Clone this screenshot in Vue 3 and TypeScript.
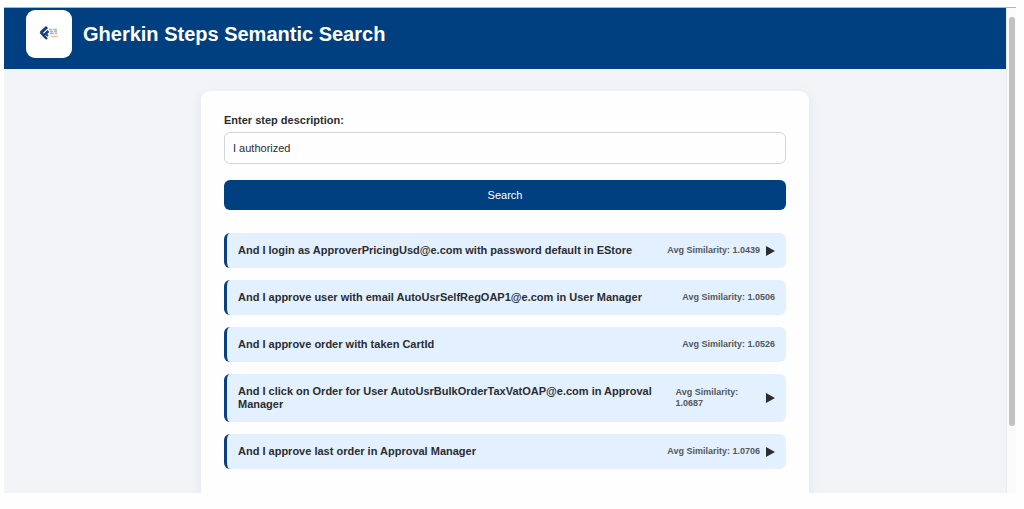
<script setup lang="ts">
import { ref } from 'vue'

interface StepResult {
  text: string
  score: string
  expandable: boolean
}

const query = ref('I authorized')

const results: StepResult[] = [
  { text: 'And I login as ApproverPricingUsd@e.com with password default in EStore', score: '1.0439', expandable: true },
  { text: 'And I approve user with email AutoUsrSelfRegOAP1@e.com in User Manager', score: '1.0506', expandable: false },
  { text: 'And I approve order with taken CartId', score: '1.0526', expandable: false },
  { text: 'And I click on Order for User AutoUsrBulkOrderTaxVatOAP@e.com in Approval Manager', score: '1.0687', expandable: true },
  { text: 'And I approve last order in Approval Manager', score: '1.0706', expandable: true },
]
</script>

<template>
  <div class="frame">
    <div class="page">
      <header class="header">
        <div class="logo">
          <svg width="22" height="18" viewBox="0 0 22 18" aria-hidden="true">
            <path d="M9 2 3 7.700" stroke="#123f7c" stroke-width="3" fill="none" />
            <path d="M2.500 7.200 5 9.700" stroke="#123f7c" stroke-width="2.600" fill="none" />
            <path d="M10.500 6 5.500 10.500 9 14" stroke="#123f7c" stroke-width="2.400" fill="none" />
            <path d="M8.500 9.500 10 11" stroke="#123f7c" stroke-width="2" fill="none" />
            <path d="M11 4.500h3M15 4.500h4M12 6.500h3M16 6.500h3M12 8.500h4M17 8.500h2" stroke="#a3b2c6" stroke-width="1.400" />
            <path d="M12.500 11.500h7.500" stroke="#f3c9a0" stroke-width="1.500" />
          </svg>
        </div>
        <h1>Gherkin Steps Semantic Search</h1>
      </header>
      <main class="content">
        <section class="card">
          <form @submit.prevent>
            <label for="step">Enter step description:</label>
            <input id="step" v-model="query" type="text" />
            <button class="search" type="submit">Search</button>
          </form>
          <ul class="results">
            <li v-for="item in results" :key="item.score" class="result">
              <span class="text">{{ item.text }}</span>
              <span class="meta">
                <span class="score">Avg Similarity: {{ item.score }}</span>
                <button v-if="item.expandable" class="toggle" type="button" aria-label="Show details">
                  <svg width="9" height="10" viewBox="0 0 9 10" aria-hidden="true">
                    <path d="M0 0 9 5 0 10z" fill="currentColor" />
                  </svg>
                </button>
              </span>
            </li>
          </ul>
        </section>
      </main>
    </div>
    <div class="track"><div class="thumb"></div></div>
  </div>
</template>

<style>
body {
  margin: 0;
  background: #fefefe;
}
</style>

<style scoped>
.frame {
  box-sizing: border-box;
  display: flex;
  height: calc(100vh - 23px);
  margin: 7px 8px 16px 4px;
  overflow: hidden;
  border-top: 1px solid #b5b3b6;
  background: #f2f4f8;
  color: #2b2d2f;
  font-family: "Liberation Sans", Arial, sans-serif;
}

.page {
  flex: 1;
  min-width: 0;
}

.header {
  box-sizing: border-box;
  display: flex;
  align-items: flex-start;
  gap: 11px;
  height: 61px;
  padding: 2px 22px;
  background: #003f80;
}

.logo {
  display: flex;
  align-items: center;
  justify-content: center;
  width: 46px;
  height: 48px;
  border-radius: 9px;
  background: #fff;
}

h1 {
  margin: 0;
  color: #fff;
  font-size: 20px;
  line-height: 48px;
}

.content {
  padding: 22px 24px;
}

.card {
  box-sizing: border-box;
  max-width: 608px;
  margin: 0 auto;
  padding: 22px 23px 48px;
  border-radius: 9px;
  background: #fefefe;
  box-shadow: 0 3px 12px rgba(20, 40, 80, 0.08);
}

form {
  display: flex;
  flex-direction: column;
}

label {
  margin-bottom: 5px;
  font-size: 11px;
  font-weight: bold;
  line-height: 14px;
}

input {
  height: 32px;
  box-sizing: border-box;
  margin-bottom: 16px;
  padding: 0 8px;
  border: 1px solid #d4d5d8;
  border-radius: 6px;
  background: #fefefe;
  color: #2b2d2f;
  font: 11px "Liberation Sans", Arial, sans-serif;
}

.search {
  height: 30px;
  border: 0;
  border-radius: 6px;
  background: #003f80;
  color: #fff;
  font: 11px "Liberation Sans", Arial, sans-serif;
}

.results {
  display: flex;
  flex-direction: column;
  gap: 12px;
  margin: 23px 0 0;
  padding: 0;
  list-style: none;
}

.result {
  display: flex;
  align-items: center;
  justify-content: space-between;
  gap: 11px;
  padding: 11px;
  border-left: 3px solid #0a3f82;
  border-radius: 6px;
  background: #e3f0ff;
  font-size: 11px;
  font-weight: bold;
  line-height: 13px;
}

.meta {
  display: flex;
  align-items: center;
  gap: 6px;
}

.score {
  color: #54575b;
  font-size: 9px;
  line-height: 11px;
}

.toggle {
  display: flex;
  padding: 0;
  border: 0;
  background: none;
  color: #2b2d2f;
}

.track {
  box-sizing: border-box;
  width: 10px;
  padding: 9px 1px 0 2px;
  border-left: 1px solid #ececee;
  background: #fafafa;
}

.thumb {
  height: 86%;
  border-radius: 3px;
  background: #c1c1c1;
}
</style>
